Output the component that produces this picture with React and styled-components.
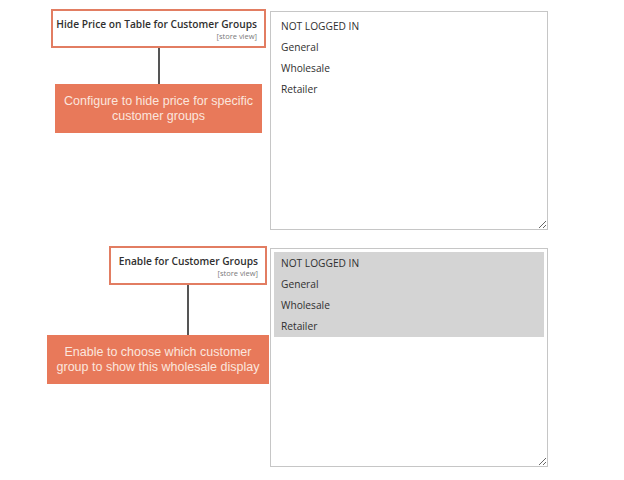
import React from "react";
import styled, { createGlobalStyle } from "styled-components";

const GlobalStyle = createGlobalStyle`
  body {
    margin: 0;
    background: #ffffff;
    font-family: "Open Sans", "Liberation Sans", sans-serif;
  }
`;

const groups = ["NOT LOGGED IN", "General", "Wholesale", "Retailer"];

const sections = [
  {
    title: "Hide Price on Table for Customer Groups",
    note: "Configure to hide price for specific customer groups",
    labelLeft: 51,
    labelWidth: 215,
    lineHeight: 36,
    noteLeft: 55,
    noteWidth: 207,
    selected: false,
    top: 9,
  },
  {
    title: "Enable for Customer Groups",
    note: "Enable to choose which customer group to show this wholesale display",
    labelLeft: 109,
    labelWidth: 158,
    lineHeight: 50,
    noteLeft: 47,
    noteWidth: 222,
    selected: true,
    top: 16,
  },
];

function Field({ section }) {
  return (
    <Row $top={section.top}>
      <LeftCol>
        <LabelGroup $left={section.labelLeft} $width={section.labelWidth}>
          <LabelBox>
            <Title>{section.title}</Title>
            <Scope>[store view]</Scope>
          </LabelBox>
          <Connector $height={section.lineHeight} />
        </LabelGroup>
        <Note $left={section.noteLeft} $width={section.noteWidth}>
          {section.note}
        </Note>
      </LeftCol>
      <SelectBox>
        <OptionList $selected={section.selected}>
          {groups.map((g) => (
            <Option key={g}>{g}</Option>
          ))}
        </OptionList>
      </SelectBox>
    </Row>
  );
}

function App() {
  return (
    <Page>
      <GlobalStyle />
      {sections.map((s) => (
        <Field key={s.title} section={s} />
      ))}
    </Page>
  );
}

export default App;

const Page = styled.div`
  width: 624px;
  height: 480px;
  display: flex;
  flex-direction: column;
`;

const Row = styled.div`
  display: flex;
  align-items: flex-start;
  margin-top: ${(p) => p.$top}px;
`;

const LeftCol = styled.div`
  width: 270px;
  display: flex;
  flex-direction: column;
`;

const LabelGroup = styled.div`
  margin-left: ${(p) => p.$left}px;
  width: ${(p) => p.$width}px;
  display: flex;
  flex-direction: column;
  align-items: center;
`;

const LabelBox = styled.div`
  box-sizing: border-box;
  width: 100%;
  height: 39px;
  border: 2px solid #e27d62;
  padding: 6px 7px 0 6px;
  display: flex;
  flex-direction: column;
  align-items: flex-end;
`;

const Title = styled.div`
  font-size: 10.2px;
  font-weight: 600;
  color: #303030;
  line-height: 14px;
  white-space: nowrap;
`;

const Scope = styled.div`
  font-size: 7.5px;
  color: #7a7a7a;
  line-height: 10px;
`;

const Connector = styled.div`
  width: 2px;
  height: ${(p) => p.$height}px;
  background: #555555;
`;

const Note = styled.div`
  box-sizing: border-box;
  margin-left: ${(p) => p.$left}px;
  width: ${(p) => p.$width}px;
  height: 49px;
  background: #e8795a;
  color: #fbe6de;
  font-family: "Liberation Sans", Arial, sans-serif;
  font-size: 12.5px;
  line-height: 15px;
  text-align: center;
  display: flex;
  align-items: center;
  justify-content: center;
  padding: 0 6px;
`;

const SelectBox = styled.div`
  box-sizing: border-box;
  width: 278px;
  height: 219px;
  margin-top: 2px;
  border: 1px solid #c6c6c6;
  padding: 3px;
  resize: both;
  overflow: auto;
`;

const OptionList = styled.div`
  display: flex;
  flex-direction: column;
  padding: 0.5px 0;
  background: ${(p) => (p.$selected ? "#d4d4d4" : "transparent")};
`;

const Option = styled.div`
  font-size: 10.2px;
  color: #303030;
  line-height: 21px;
  padding-left: 7px;
`;
